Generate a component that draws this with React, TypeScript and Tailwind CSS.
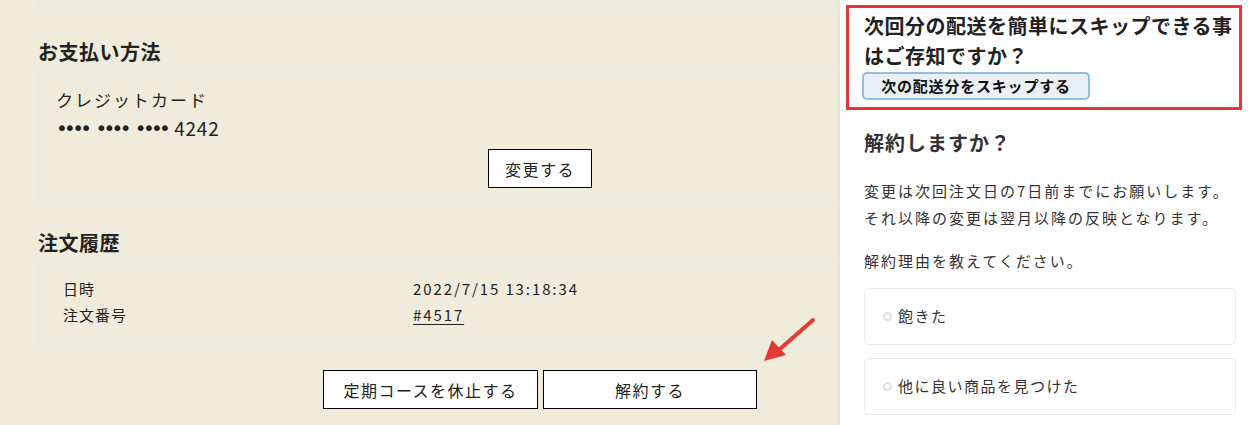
const font = "font-['Noto_Sans_CJK_JP','Noto_Sans',sans-serif]"

function OutlineButton({ label, className = '' }: { label: string; className?: string }) {
  return (
    <button
      type="button"
      className={`h-[39px] border border-black bg-white text-[16px] tracking-[1.5px] text-[#222] ${className}`}
    >
      {label}
    </button>
  )
}

function ReasonOption({ label }: { label: string }) {
  return (
    <label className="flex h-[57px] items-center gap-[6px] rounded-[5px] border border-[#ececec] bg-white pl-[18px]">
      <span className="h-[9px] w-[9px] rounded-full border-2 border-[#dde2e6]" />
      <span className="text-[15px] tracking-[1.5px] text-[#333]">{label}</span>
    </label>
  )
}

export default function App() {
  return (
    <div className={`relative h-[425px] w-[1260px] overflow-hidden bg-[#f0ecdc] text-[#222] ${font}`}>
      {/* Main page, wider than the window; drawer sits over its right side */}
      <main className="w-[1080px] pl-[38px] pr-[38px]">
        <div className="h-[14px] border-x-2 border-b-2 border-[#ebe9e2]" />

        <h2 className="mt-[24px] text-[20px] font-bold leading-[28px] tracking-[0.5px]">お支払い方法</h2>
        <section className="mt-[4px] flex h-[132px] flex-col border-2 border-[#ebe9e2] pl-[16px] pt-[14px]">
          <p className="text-[17px] leading-[28px] tracking-[2px]">クレジットカード</p>
          <p className="flex items-center gap-[7px] leading-[28px]">
            <span className="font-['DejaVu_Sans',sans-serif] text-[20px] tracking-[-3.7px]">••••</span>
            <span className="font-['DejaVu_Sans',sans-serif] text-[20px] tracking-[-3.7px]">••••</span>
            <span className="font-['DejaVu_Sans',sans-serif] text-[20px] tracking-[-3.7px]">••••</span>
            <span className="text-[19px] tracking-[0.8px]">4242</span>
          </p>
          <div className="mt-[7px] flex justify-center pr-[16px]">
            <OutlineButton label="変更する" className="w-[104px]" />
          </div>
        </section>

        <h2 className="mt-[27px] text-[20px] font-bold leading-[28px] tracking-[0.5px]">注文履歴</h2>
        <section className="mt-[1px] h-[87px] border-2 border-[#ebe9e2] pl-[23px] pt-[16px]">
          <dl className="grid grid-cols-[350px_1fr] text-[15px] leading-[26px] tracking-[1px]">
            <dt>日時</dt>
            <dd className="tracking-[1.9px]">2022/7/15 13:18:34</dd>
            <dt>注文番号</dt>
            <dd className="tracking-[1.9px]">
              <span className="underline underline-offset-[3px]">#4517</span>
            </dd>
          </dl>
        </section>

        <div className="mt-[25px] flex justify-center gap-[5px]">
          <OutlineButton label="定期コースを休止する" className="w-[215px]" />
          <OutlineButton label="解約する" className="w-[214px]" />
        </div>
      </main>

      {/* Red annotation arrow */}
      <svg className="absolute left-[755px] top-[312px]" width="70" height="60" viewBox="755 312 70 60">
        <line x1="813" y1="320" x2="780" y2="349" stroke="#e53935" strokeWidth="4" strokeLinecap="round" />
        <polygon points="764,361 772,340 786,355" fill="#e53935" />
      </svg>

      {/* Cancel drawer */}
      <aside className="absolute right-0 top-0 flex h-full w-[420px] flex-col bg-white pl-[6px] pr-[18px] pt-[5px] shadow-[-3px_0_4px_rgba(0,0,0,0.03)]">
        <div className="border-[3px] border-[#e53935] pb-[7px] pl-[13px] pt-[3px]">
          <p className="pl-[2px] text-[20px] font-bold leading-[30px] tracking-[0.5px] text-[#222]">
            次回分の配送を簡単にスキップできる事はご存知ですか？
          </p>
          <button
            type="button"
            className="mt-[1px] h-[28px] w-[228px] rounded-[5px] border-2 border-[#90bfe0] bg-[#eaf0f6] text-[15px] font-bold tracking-[0.8px] text-[#111]"
          >
            次の配送分をスキップする
          </button>
        </div>

        <div className="pl-[18px] pr-[6px]">
          <h3 className="mt-[19px] text-[20px] font-bold leading-[28px] tracking-[1px] text-[#333]">解約しますか？</h3>
          <p className="mt-[20px] text-[15px] leading-[27px] tracking-[2px] text-[#333]">
            変更は次回注文日の7日前までにお願いします。
            <br />
            それ以降の変更は翌月以降の反映となります。
          </p>
          <p className="mt-[16px] text-[15px] leading-[27px] tracking-[2px] text-[#333]">解約理由を教えてください。</p>
          <div className="mt-[14px] flex flex-col gap-[13px]">
            <ReasonOption label="飽きた" />
            <ReasonOption label="他に良い商品を見つけた" />
          </div>
        </div>
      </aside>
    </div>
  )
}
